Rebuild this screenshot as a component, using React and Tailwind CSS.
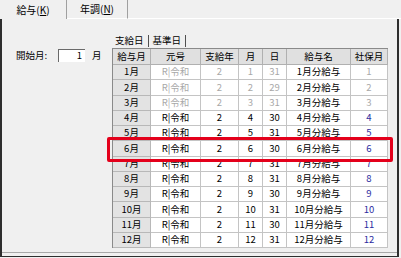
import React from 'react'

const days = [31, 29, 31, 30, 31, 30, 31, 31, 30, 31, 30, 31]
const headers = ['給与月', '元号', '支給年', '月', '日', '給与名', '社保月']

export default function App() {
  const font = { fontFamily: '"Noto Sans CJK JP", "Noto Sans", sans-serif' }

  return (
    <div className="relative flex h-[258px] w-[401px] flex-col overflow-hidden bg-[#f0f0f0] text-[9.5px] text-black" style={font}>
      {/* タブ */}
      <div className="flex h-[19px] shrink-0">
        <div className="flex w-[67px] items-center justify-center border-r border-[#a0a0a0] pb-[1px] text-[10px]">
          給与(<span className="underline">K</span>)
        </div>
        <div className="flex w-[61px] items-center justify-center border-r border-b border-[#a0a0a0] border-b-white pb-[1px] text-[10px]">
          年調(<span className="underline">N</span>)
        </div>
        <div className="flex-1 border-b border-white" />
      </div>

      {/* パネル */}
      <div className="mr-[2px] mb-[1px] flex flex-1 border-l-2 border-r-2 border-b border-[#2e2e2e]">
        <div className="flex flex-1 border-b border-[#a8a8a8] mb-[3px]">
          {/* 開始月 */}
          <div className="w-[110px] shrink-0 pl-[14px] pt-[30px]">
            <div className="flex h-[13px] items-center">
              <span className="w-[42px] leading-none">開始月:</span>
              <div className="flex h-[13px] w-[27px] items-center justify-end border-t border-l border-[#6a6a6a] border-r-[#e0e0e0] border-b-[#e0e0e0] bg-white pr-[3px] leading-none">
                1
              </div>
              <span className="ml-[7px] leading-none">月</span>
            </div>
          </div>

          {/* 右側 */}
          <div className="flex flex-col pt-[14px]">
            <div className="flex h-[15px] items-center pl-[3px]">
              <span className="leading-none">支給日</span>
              <span className="mx-[4px] h-[12px] w-px bg-[#505050]" />
              <span className="leading-none">基準日</span>
              <span className="ml-[4px] h-[12px] w-px bg-[#505050]" />
            </div>

            <div className="grid grid-cols-[38px_50px_38px_24px_24px_64px_37px] border-t border-l border-[#8a8a8a]">
              {headers.map((h) => (
                <div key={h} className="flex h-[16px] items-center justify-center border-r border-b border-[#b0b0b0] bg-[#e0e0e0] leading-none">
                  {h}
                </div>
              ))}
              {days.map((d, i) => {
                const m = i + 1
                const dim = i < 3
                const cell = 'flex h-[15.25px] items-center justify-center border-r border-b border-[#c4c4c4] bg-white leading-none'
                const sub = dim ? 'text-[#a8a8a8]' : 'text-black'
                return (
                  <React.Fragment key={m}>
                    <div className="flex h-[15.25px] items-center justify-center border-r border-b border-[#b8b8b8] bg-[#e3e3e3] leading-none">
                      {m}月
                    </div>
                    <div className={`${cell} ${sub}`}>R|令和</div>
                    <div className={`${cell} ${sub}`}>2</div>
                    <div className={`${cell} ${sub}`}>{m}</div>
                    <div className={`${cell} ${sub}`}>{d}</div>
                    <div className={cell}>{m}月分給与</div>
                    <div className={`${cell} ${dim ? 'text-[#a8a8a8]' : 'text-[#2c2ca0]'}`}>{m}</div>
                  </React.Fragment>
                )
              })}
            </div>
          </div>
        </div>
      </div>

      {/* 赤枠 */}
      <div className="absolute left-[107px] top-[137px] h-[25px] w-[286px] rounded-[2px] border-[3px] border-[#e4001b]" />
    </div>
  )
}
